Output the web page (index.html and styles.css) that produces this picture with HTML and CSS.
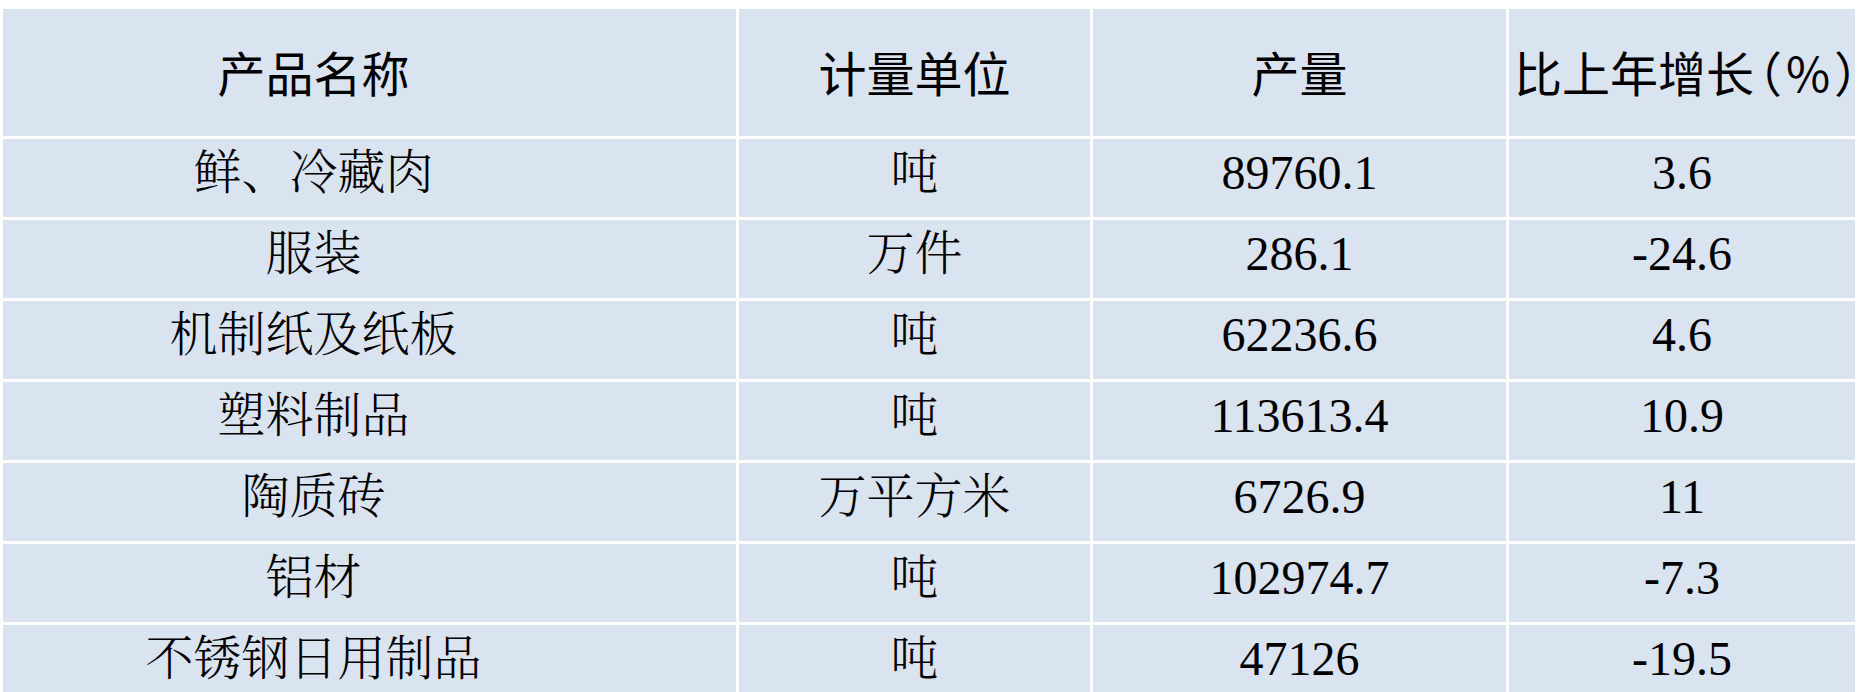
FILE: index.html
```html
<!DOCTYPE html>
<html lang="zh-CN">
<head>
<meta charset="utf-8">
<title>主要工业产品产量</title>
<link rel="stylesheet" href="styles.css">
</head>
<body>
<div class="table">
  <div class="cell head name">产品名称</div>
  <div class="cell head">计量单位</div>
  <div class="cell head">产量</div>
  <div class="cell head growth">比上年增长<span class="unit">（%）</span></div>

  <div class="cell name">鲜、冷藏肉</div>
  <div class="cell">吨</div>
  <div class="cell">89760.1</div>
  <div class="cell">3.6</div>

  <div class="cell name">服装</div>
  <div class="cell">万件</div>
  <div class="cell">286.1</div>
  <div class="cell">-24.6</div>

  <div class="cell name">机制纸及纸板</div>
  <div class="cell">吨</div>
  <div class="cell">62236.6</div>
  <div class="cell">4.6</div>

  <div class="cell name">塑料制品</div>
  <div class="cell">吨</div>
  <div class="cell">113613.4</div>
  <div class="cell">10.9</div>

  <div class="cell name">陶质砖</div>
  <div class="cell">万平方米</div>
  <div class="cell">6726.9</div>
  <div class="cell">11</div>

  <div class="cell name">铝材</div>
  <div class="cell">吨</div>
  <div class="cell">102974.7</div>
  <div class="cell">-7.3</div>

  <div class="cell name">不锈钢日用制品</div>
  <div class="cell">吨</div>
  <div class="cell">47126</div>
  <div class="cell">-19.5</div>
</div>
</body>
</html>
```
FILE: styles.css
```css
html, body {
  margin: 0;
  padding: 0;
  background: #ffffff;
}

body {
  overflow: hidden;
  font-family: "Liberation Serif", "Noto Serif CJK SC", "Noto Sans CJK SC", serif;
  color: #000000;
}

.table {
  display: grid;
  grid-template-columns: 733px 351px 413px 346px;
  grid-template-rows: 127px repeat(7, 78px);
  gap: 3px;
  padding: 9px 0 0 3px;
  width: max-content;
}

.cell {
  background: #dae3f0;
  display: flex;
  align-items: center;
  justify-content: center;
  font-size: 48px;
  font-weight: 350;
  line-height: 1;
  white-space: nowrap;
  padding-bottom: 10px;
  box-sizing: border-box;
}

.cell.name {
  padding-right: 112px;
}

.cell.head {
  font-family: "Noto Sans CJK SC", sans-serif;
  font-weight: 400;
  padding-bottom: 4px;
}

.cell.head.name {
  padding-right: 112px;
}

.cell.growth {
  font-feature-settings: "halt" 1;
  padding-left: 12px;
}

.unit {
  letter-spacing: 4px;
  padding-left: 4px;
}
```
